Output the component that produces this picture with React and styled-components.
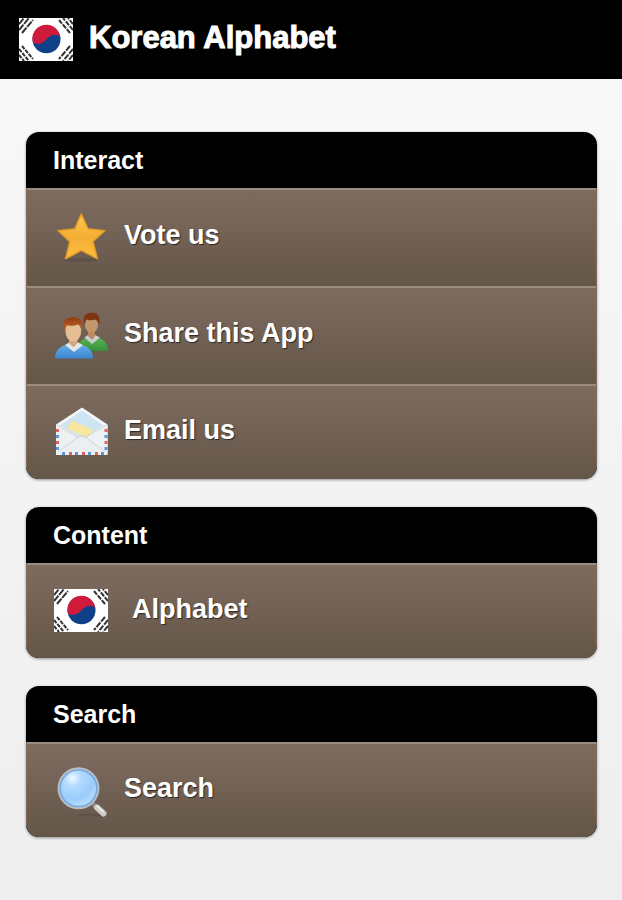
import React from "react";
import styled, { createGlobalStyle } from "styled-components";

const GlobalStyle = createGlobalStyle`
  html {
    min-height: 100%;
    background: linear-gradient(#f9f9f9, #eeeeee);
  }

  body {
    margin: 0;
    font-family: "Liberation Sans", Arial, sans-serif;
    font-weight: bold;
    color: #fff;
  }
`;

function FlagIcon() {
  return (
    <Flag viewBox="0 0 54 43" aria-hidden="true">
      <rect width="54" height="43" fill="#fff" />
      <g stroke="#333" strokeWidth="2">
        <path d="M0 6 5 0M0 12 10 0M3 15 14 2" strokeDasharray="7 1" />
        <path d="M54 6 49 0M54 12 44 0M51 15 40 2" strokeDasharray="5 1.2" />
        <path d="M0 37 5 43M0 31 10 43M3 28 14 41" strokeDasharray="4 1.2" />
        <path d="M54 37 49 43M54 31 44 43M51 28 40 41" strokeDasharray="6 1.2" />
      </g>
      <circle cx="27.5" cy="21.3" r="14" fill="#0f4189" />
      <path
        d="M13.8 24A14 14 0 1 1 41.3 19C37.5 15.3 32 16 27.5 21.3C23.5 26 17.5 27.6 13.8 24Z"
        fill="#d01a3c"
      />
    </Flag>
  );
}

function StarIcon() {
  return (
    <Icon viewBox="0 0 54 54" aria-hidden="true">
      <defs>
        <linearGradient id="star" x1="0" y1="0" x2="0" y2="1">
          <stop offset="0" stopColor="#fdcb4c" />
          <stop offset="0.5" stopColor="#f3ae35" />
          <stop offset="1" stopColor="#fcbf3e" />
        </linearGradient>
      </defs>
      <ellipse cx="27" cy="50" rx="18" ry="2" fill="#000" opacity="0.1" />
      <path
        d="M27.3 3.8 34 18.8 51 20.6 39 31.5 43.5 49 27.3 40.5 11.5 49 15.7 31.5 3.8 20.6 20.8 18.8Z"
        fill="url(#star)"
        stroke="#e29a25"
        strokeWidth="1.4"
        strokeLinejoin="round"
      />
    </Icon>
  );
}

function PeopleIcon() {
  return (
    <Icon viewBox="0 0 54 54" aria-hidden="true">
      <defs>
        <linearGradient id="hair" x1="0" y1="0" x2="0" y2="1">
          <stop offset="0" stopColor="#8f3d12" />
          <stop offset="1" stopColor="#c56125" />
        </linearGradient>
        <linearGradient id="blue" x1="0" y1="0" x2="0" y2="1">
          <stop offset="0" stopColor="#69aee9" />
          <stop offset="1" stopColor="#3b86d0" />
        </linearGradient>
        <linearGradient id="green" x1="0" y1="0" x2="0" y2="1">
          <stop offset="0" stopColor="#5cb656" />
          <stop offset="1" stopColor="#35913a" />
        </linearGradient>
      </defs>
      <path d="M23 43C23 34 29 29.5 37 29C47 29 54 33 54 43Z" fill="url(#green)" />
      <path d="M30.5 29.5 34 27H41L46 29.5 38 36Z" fill="#c9d0d0" />
      <path d="M34 20H41V28L38 32 34 28Z" fill="#b98b62" />
      <ellipse cx="37.5" cy="16.5" rx="6.6" ry="8" fill="#c4976f" />
      <path
        d="M30.5 17C28 9 31 4.5 38 4.7C45 5 46.8 10 44.8 17C44 14 43 12 41 11.5C37 13 34 12 32 11.5Z"
        fill="#7e3511"
      />
      <path d="M1 50.5C1 41 8 36 20 36C32 36 39 41 39 50.5Z" fill="url(#blue)" />
      <path d="M11 37 15 34.5H24L29 37 20 44Z" fill="#e3e7ea" />
      <path d="M15 27H23.5V35L19.5 39.5 15 35Z" fill="#d5a77b" />
      <ellipse cx="19.3" cy="23" rx="7.9" ry="10.5" fill="#e6be93" />
      <path
        d="M10.7 22C7 14 11 9.4 19 9.3C27 9.4 30 14 27.3 22C26.7 19 25.5 17 24 16.5C19 18.5 14 17.5 12 17Z"
        fill="url(#hair)"
      />
    </Icon>
  );
}

function EnvelopeIcon() {
  return (
    <Icon viewBox="0 0 54 54" aria-hidden="true">
      <path d="M2 19.5 28 2.5 53.5 19.5V50H2Z" fill="#f4f6f7" />
      <path d="M6 20.5 28 5.5 49.5 20.5 28 34Z" fill="#cde4f2" />
      <path d="M18 15.5 39.5 25 33 33 13 23.5Z" fill="#f8e7a0" />
      <path d="M2 20 23 32 2 49ZM53.5 20 33 32 53.5 49Z" fill="#eef1f2" />
      <path d="M2 50 25 31.5Q27.7 30 30.5 31.5L53.5 50Z" fill="#eceff1" />
      <path
        d="M3 20 25 33M52.5 20 30.5 33M4 47 25 31.5Q27.7 30 30.5 31.5L51.5 47"
        fill="none"
        stroke="#cdd2d5"
        strokeWidth="1"
      />
      <path d="M3.5 24V48M52 24V48" stroke="#e0625e" strokeWidth="3" strokeDasharray="3 9" />
      <path d="M3.5 30V48M52 30V48" stroke="#5b96d8" strokeWidth="3" strokeDasharray="3 9" />
      <path d="M8 48.5H50" stroke="#5b96d8" strokeWidth="3" strokeDasharray="3 10" />
      <path d="M15 48.5H50" stroke="#e0625e" strokeWidth="3" strokeDasharray="3 10" />
    </Icon>
  );
}

function SearchIcon() {
  return (
    <Icon viewBox="0 0 54 54" aria-hidden="true">
      <defs>
        <radialGradient id="lens" cx="0.35" cy="0.25" r="0.8">
          <stop offset="0" stopColor="#f2faff" />
          <stop offset="0.25" stopColor="#b5dbff" />
          <stop offset="0.65" stopColor="#9accfb" />
          <stop offset="1" stopColor="#c2e4ff" />
        </radialGradient>
      </defs>
      <ellipse cx="37" cy="52" rx="14" ry="1.5" fill="#000" opacity="0.1" />
      <path d="M38.5 40.5 43 45" stroke="#86898c" strokeWidth="4" />
      <path d="M43 44.5 49.5 50.5" stroke="#cfcdca" strokeWidth="6" strokeLinecap="round" />
      <path d="M43.5 43.5 49 48.5" stroke="#eceae7" strokeWidth="2" strokeLinecap="round" />
      <circle cx="24.5" cy="25.3" r="20" fill="url(#lens)" stroke="#b9bcc0" strokeWidth="2" />
      <circle cx="24.5" cy="25.3" r="18.3" fill="none" stroke="#76a8de" strokeWidth="1.5" />
    </Icon>
  );
}

const sections = [
  {
    title: "Interact",
    items: [
      { label: "Vote us", icon: <StarIcon /> },
      { label: "Share this App", icon: <PeopleIcon /> },
      { label: "Email us", icon: <EnvelopeIcon /> },
    ],
  },
  {
    title: "Content",
    items: [{ label: "Alphabet", icon: <FlagIcon />, wide: true }],
  },
  {
    title: "Search",
    items: [{ label: "Search", icon: <SearchIcon /> }],
  },
];

function App() {
  return (
    <>
      <GlobalStyle />
      <Header>
        <FlagIcon />
        <Title>Korean Alphabet</Title>
      </Header>
      <Main>
        {sections.map((section) => (
          <Card key={section.title}>
            <CardTitle>{section.title}</CardTitle>
            <List>
              {section.items.map((item) => (
                <Item key={item.label}>
                  <ItemLink href="#" $wide={item.wide}>
                    {item.icon}
                    <Label>{item.label}</Label>
                  </ItemLink>
                </Item>
              ))}
            </List>
          </Card>
        ))}
      </Main>
    </>
  );
}

export default App;

const Header = styled.header`
  display: flex;
  align-items: center;
  gap: 16px;
  height: 79px;
  padding: 0 19px;
  background: #000;
`;

const Title = styled.h1`
  margin: 0;
  padding-bottom: 4px;
  font-size: 31px;
  line-height: 36px;
  -webkit-text-stroke: 1px #fff;
`;

const Main = styled.main`
  display: flex;
  flex-direction: column;
  gap: 28px;
  padding: 53px 25px 60px 26px;
`;

const Card = styled.section`
  border-radius: 13px;
  overflow: hidden;
  background: #000;
  box-shadow: 0 1px 3px rgba(0, 0, 0, 0.4);
`;

const CardTitle = styled.h2`
  margin: 0;
  padding: 0 27px;
  font-size: 25px;
  line-height: 56px;
`;

const List = styled.ul`
  margin: 0;
  padding: 0;
  list-style: none;
`;

const Item = styled.li`
  box-sizing: border-box;
  height: 98px;
  border: solid #7c6c60;
  border-width: 0 1px;
  background: linear-gradient(#7e6c5f, #65564a);
  box-shadow: inset 0 2px #9c8b7f;

  &:last-child {
    height: 95px;
  }
`;

const ItemLink = styled.a`
  display: flex;
  align-items: center;
  gap: ${(props) => (props.$wide ? "24px" : "16px")};
  height: 100%;
  padding: 0 27px;
  color: inherit;
  text-decoration: none;
`;

const Label = styled.span`
  padding-bottom: 4px;
  font-size: 27px;
  line-height: 32px;
  text-shadow: 1px 1px 1px rgba(0, 0, 0, 0.6);
`;

const Icon = styled.svg`
  flex: none;
  width: 54px;
  height: 54px;
`;

const Flag = styled.svg`
  flex: none;
  width: 54px;
  height: 43px;
`;
